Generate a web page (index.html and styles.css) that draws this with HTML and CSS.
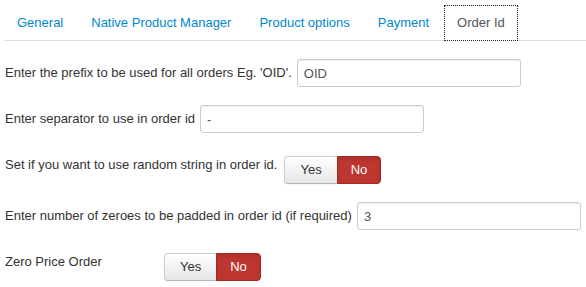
FILE: index.html
```html
<!DOCTYPE html>
<html lang="en">
<head>
    <meta charset="UTF-8">
    <meta name="viewport" content="width=device-width, initial-scale=1.0">
    <title>Order Id</title>
    <link rel="stylesheet" href="styles.css">
</head>
<body>

    <ul class="tabs">
        <li><a href="#">General</a></li>
        <li><a href="#">Native Product Manager</a></li>
        <li><a href="#">Product options</a></li>
        <li><a href="#">Payment</a></li>
        <li class="active"><a href="#">Order Id</a></li>
    </ul>

    <form class="form">
        <div class="row">
            <label>Enter the prefix to be used for all orders Eg. 'OID'.</label>
            <input type="text" value="OID">
        </div>

        <div class="row">
            <label>Enter separator to use in order id</label>
            <input type="text" value="-">
        </div>

        <div class="row toggle">
            <label>Set if you want to use random string in order id.</label>
            <div class="btn-group">
                <button type="button" class="btn">Yes</button>
                <button type="button" class="btn btn-no">No</button>
            </div>
        </div>

        <div class="row">
            <label>Enter number of zeroes to be padded in order id (if required)</label>
            <input type="text" value="3">
        </div>

        <div class="row toggle">
            <label class="fixed">Zero Price Order</label>
            <div class="btn-group">
                <button type="button" class="btn">Yes</button>
                <button type="button" class="btn btn-no">No</button>
            </div>
        </div>
    </form>

</body>
</html>
```

FILE: styles.css
```css
body {
    margin: 0;
    padding-top: 5px;
    font-family: "Liberation Sans", Arial, sans-serif;
    font-size: 13px;
    line-height: 18px;
    color: #333;
    background: #fff;
}
.tabs {
    list-style: none;
    display: flex;
    margin: 0 0 0 4px;
    padding: 0;
    border-bottom: 1px solid #ddd;
}
.tabs li {
    margin-right: 2px;
    margin-bottom: -1px;
}
.tabs a {
    display: block;
    padding: 8px 12px;
    line-height: 18px;
    color: #0088cc;
    text-decoration: none;
    border: 1px solid transparent;
}
.tabs .active a {
    color: #555;
    background: #fff;
    border: 1px dotted #222;
}
.form {
    padding: 18px 0 0 5px;
}
.row {
    display: flex;
    align-items: center;
    gap: 5px;
    margin-bottom: 18px;
}
.row.toggle {
    align-items: flex-start;
    gap: 7px;
}
.row.toggle label {
    padding-top: 5px;
}
.row.toggle .btn-group {
    margin-top: 5px;
}
label.fixed {
    width: 152px;
}
input {
    box-sizing: border-box;
    width: 224px;
    height: 28px;
    padding: 4px 6px;
    font-family: inherit;
    font-size: 13px;
    color: #555;
    border: 1px solid #ccc;
    border-radius: 3px;
    box-shadow: inset 0 1px 1px rgba(0, 0, 0, 0.075);
}
.btn-group {
    display: flex;
}
.btn {
    height: 28px;
    padding: 4px 15px;
    font-family: inherit;
    font-size: 13px;
    line-height: 18px;
    color: #333;
    background: linear-gradient(#fff, #e6e6e6);
    border: 1px solid #ccc;
    border-bottom-color: #b3b3b3;
    border-radius: 4px 0 0 4px;
    box-shadow: inset 0 1px 0 rgba(255, 255, 255, 0.2), 0 1px 2px rgba(0, 0, 0, 0.05);
}
.btn-no {
    margin-left: -1px;
    padding: 4px 13px;
    color: #fff;
    background: #bd362f;
    border-color: #a52a24;
    border-radius: 0 4px 4px 0;
    box-shadow: inset 0 2px 4px rgba(0, 0, 0, 0.1);
}
```
